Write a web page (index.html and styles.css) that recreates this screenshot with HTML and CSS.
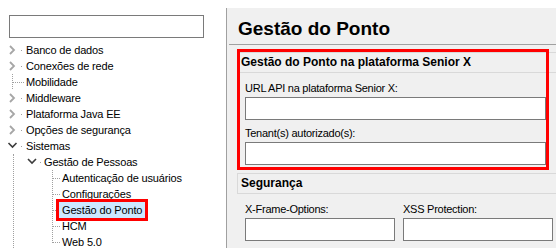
FILE: index.html
```html
<!DOCTYPE html>
<html lang="pt-BR">
<head>
  <meta charset="UTF-8" />
  <meta name="viewport" content="width=device-width, initial-scale=1.0"/>
  <title>Gestão do Ponto</title>
  <link rel="stylesheet" href="styles.css">
</head>
<body>
  <div class="window">
    <aside class="tree-pane">
      <input type="text" class="search">

      <ul class="tree">
        <li class="row">
          <svg class="tw" width="26" height="16"><path d="M10 4l4 4-4 4" class="chev-closed"/><rect x="21" y="8" width="1" height="1" class="dot"/></svg>
          <span class="label">Banco de dados</span>
        </li>
        <li class="row">
          <svg class="tw" width="26" height="16"><path d="M10 4l4 4-4 4" class="chev-closed"/><rect x="21" y="8" width="1" height="1" class="dot"/></svg>
          <span class="label">Conexões de rede</span>
        </li>
        <li class="row">
          <svg class="tw" width="26" height="16"><path d="M12.5 0v16M13 8.5h11" class="line"/></svg>
          <span class="label">Mobilidade</span>
        </li>
        <li class="row">
          <svg class="tw" width="26" height="16"><path d="M10 4l4 4-4 4" class="chev-closed"/><rect x="21" y="8" width="1" height="1" class="dot"/></svg>
          <span class="label">Middleware</span>
        </li>
        <li class="row">
          <svg class="tw" width="26" height="16"><path d="M10 4l4 4-4 4" class="chev-closed"/><rect x="21" y="8" width="1" height="1" class="dot"/></svg>
          <span class="label">Plataforma Java EE</span>
        </li>
        <li class="row">
          <svg class="tw" width="26" height="16"><path d="M10 4l4 4-4 4" class="chev-closed"/><rect x="21" y="8" width="1" height="1" class="dot"/></svg>
          <span class="label">Opções de segurança</span>
        </li>
        <li>
          <div class="row">
            <svg class="tw" width="26" height="16"><path d="M8.5 5l4 4 4-4" class="chev-open"/><rect x="21" y="8" width="1" height="1" class="dot"/></svg>
            <span class="label">Sistemas</span>
          </div>
          <ul class="sub">
            <li>
              <div class="row">
                <svg class="tw" width="30" height="16"><path d="M14 5l4 4 4-4" class="chev-open"/><rect x="26" y="8" width="1" height="1" class="dot"/></svg>
                <span class="label">Gestão de Pessoas</span>
              </div>
              <ul class="sub2">
                <li class="row">
                  <svg class="tw" width="10" height="16"><path d="M0.5 0v16M1 8.5h8" class="line"/></svg>
                  <span class="label">Autenticação de usuários</span>
                </li>
                <li class="row">
                  <svg class="tw" width="10" height="16"><path d="M0.5 0v16M1 8.5h8" class="line"/></svg>
                  <span class="label">Configurações</span>
                </li>
                <li class="row">
                  <svg class="tw" width="10" height="16"><path d="M0.5 0v16M1 8.5h8" class="line"/></svg>
                  <span class="label selected">Gestão do Ponto</span>
                </li>
                <li class="row">
                  <svg class="tw" width="10" height="16"><path d="M0.5 0v16M1 8.5h8" class="line"/></svg>
                  <span class="label">HCM</span>
                </li>
                <li class="row">
                  <svg class="tw" width="10" height="16"><path d="M0.5 0v9M1 8.5h8" class="line"/></svg>
                  <span class="label">Web 5.0</span>
                </li>
              </ul>
            </li>
          </ul>
        </li>
      </ul>
    </aside>

    <main class="content">
      <h1 class="page-title">Gestão do Ponto</h1>

      <section class="group marked">
        <div class="group-head">Gestão do Ponto na plataforma Senior X</div>
        <div class="group-body">
          <label class="field">
            <span>URL API na plataforma Senior X:</span>
            <input type="text" class="wide">
          </label>
          <label class="field">
            <span>Tenant(s) autorizado(s):</span>
            <input type="text" class="wide">
          </label>
        </div>
      </section>

      <section class="group">
        <div class="group-head">Segurança</div>
        <div class="group-body cols">
          <label class="field">
            <span>X-Frame-Options:</span>
            <input type="text" class="half">
          </label>
          <label class="field">
            <span>XSS Protection:</span>
            <input type="text" class="half">
          </label>
        </div>
      </section>
    </main>
  </div>
</body>
</html>
```

FILE: styles.css
```css
body {
  margin: 0;
  background: #fff;
  font-family: "Liberation Sans", Arial, sans-serif;
  font-size: 11px;
  color: #000;
  overflow: hidden;
}
.window {
  display: flex;
  height: 248px;
  padding-top: 8px;
  box-sizing: border-box;
}

/* left tree */
.tree-pane {
  width: 226px;
  flex: none;
  padding-top: 7px;
  border-right: 1px solid #a0a0a0;
  background: #fff;
  overflow: hidden;
}
.search {
  display: block;
  width: 195px;
  height: 23px;
  margin: 0 0 0 9px;
  padding: 0;
  box-sizing: border-box;
  border: 1px solid #7a7a7a;
  background: #fff;
}
.tree, .tree ul {
  list-style: none;
  margin: 0;
  padding: 0;
}
.tree {
  margin-top: 4px;
}
.row {
  display: flex;
  align-items: center;
  height: 16px;
  white-space: nowrap;
}
.tw {
  display: block;
  flex: none;
}
.label {
  line-height: 16px;
  letter-spacing: -0.15px;
}
.label.selected {
  padding: 0 3px;
  margin-left: -3px;
  background: #cce8ff;
  outline: 3px solid #f00;
}
.chev-closed {
  fill: none;
  stroke: #a6a6a6;
  stroke-width: 1.8;
}
.chev-open {
  fill: none;
  stroke: #3c3c3c;
  stroke-width: 1.6;
}
.dot {
  fill: #a0a0a0;
}
.line {
  fill: none;
  stroke: #a0a0a0;
  stroke-width: 1;
  stroke-dasharray: 1 1;
  shape-rendering: crispEdges;
}
.sub {
  margin-left: 13px !important;
  border-left: 1px dotted #a0a0a0;
}
.sub2 {
  margin-left: 38px !important;
}

/* right panel */
.content {
  flex: 1;
  min-width: 0;
  background: #f0f0f0;
  overflow: hidden;
}
.page-title {
  margin: 0 0 0 2px;
  padding: 10px 0 5px 9px;
  font-size: 19px;
  line-height: 21px;
  font-weight: bold;
  border-bottom: 1px solid #a0a0a0;
}
.group {
  margin-left: 10px;
}
.group.marked {
  position: relative;
  margin-top: 7px;
}
.group.marked::after {
  content: "";
  position: absolute;
  left: 0;
  top: -3px;
  width: 312px;
  height: 121px;
  box-sizing: border-box;
  border: 3px solid #f00;
  pointer-events: none;
}
.group-head {
  height: 19px;
  padding-left: 3px;
  border: 1px solid #d9d9d9;
  border-right: none;
  font-size: 12px;
  line-height: 19px;
  font-weight: bold;
}
.group-body {
  padding: 9px 0 8px 8px;
}
.cols {
  display: flex;
  gap: 8px;
}
.field {
  display: block;
}
.field + .field {
  margin-top: 7px;
}
.cols .field + .field {
  margin-top: 0;
}
.field span {
  display: block;
  line-height: 13px;
  margin-bottom: 2px;
  letter-spacing: -0.25px;
}
.field input {
  display: block;
  height: 23px;
  margin: 0;
  padding: 0;
  box-sizing: border-box;
  border: 1px solid #7a7a7a;
  background: #fff;
}
.wide {
  width: 301px;
}
.half {
  width: 150px;
}
```
